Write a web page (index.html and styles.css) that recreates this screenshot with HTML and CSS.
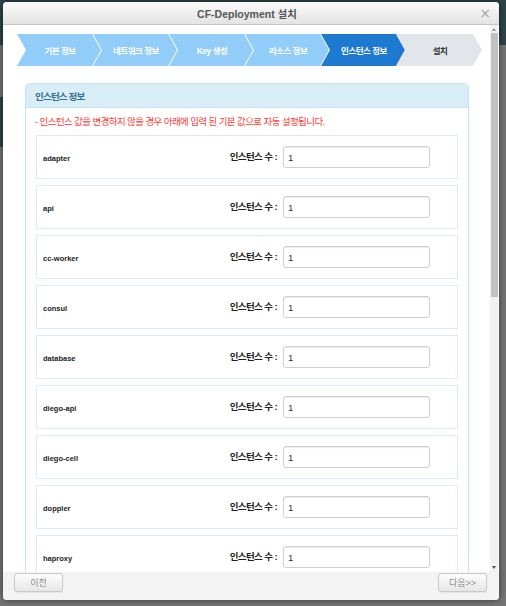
FILE: index.html
```html
<!DOCTYPE html>
<html lang="ko">
<head>
<meta charset="utf-8">
<title>CF-Deployment 설치</title>
<link rel="stylesheet" href="styles.css">
</head>
<body>
<div class="modal">
  <div class="modal-title">
    <span class="title-text">CF-Deployment 설치</span>
    <span class="close">×</span>
  </div>
  <div class="modal-body">
    <div class="scroll-content">
      <ol class="steps">
        <li class="step done">기본 정보</li>
        <li class="step done">네트워크 정보</li>
        <li class="step done">Key 생성</li>
        <li class="step done">리소스 정보</li>
        <li class="step active">인스턴스 정보</li>
        <li class="step todo">설치</li>
      </ol>
      <section class="panel">
        <div class="panel-head">인스턴스 정보</div>
        <div class="panel-body">
          <p class="notice">- 인스턴스 값을 변경하지 않을 경우 아래에 입력 된 기본 값으로 자동 설정됩니다.</p>
          <div class="row"><span class="name">adapter</span><label class="label">인스턴스 수 :</label><input class="field" type="text" value="1"></div>
          <div class="row"><span class="name">api</span><label class="label">인스턴스 수 :</label><input class="field" type="text" value="1"></div>
          <div class="row"><span class="name">cc-worker</span><label class="label">인스턴스 수 :</label><input class="field" type="text" value="1"></div>
          <div class="row"><span class="name">consul</span><label class="label">인스턴스 수 :</label><input class="field" type="text" value="1"></div>
          <div class="row"><span class="name">database</span><label class="label">인스턴스 수 :</label><input class="field" type="text" value="1"></div>
          <div class="row"><span class="name">diego-api</span><label class="label">인스턴스 수 :</label><input class="field" type="text" value="1"></div>
          <div class="row"><span class="name">diego-cell</span><label class="label">인스턴스 수 :</label><input class="field" type="text" value="1"></div>
          <div class="row"><span class="name">doppler</span><label class="label">인스턴스 수 :</label><input class="field" type="text" value="1"></div>
          <div class="row"><span class="name">haproxy</span><label class="label">인스턴스 수 :</label><input class="field" type="text" value="1"></div>
        </div>
      </section>
    </div>
    <div class="scrollbar" aria-hidden="true">
      <span class="sb-arrow up"></span>
      <span class="sb-thumb"></span>
      <span class="sb-space"></span>
      <span class="sb-arrow down"></span>
    </div>
  </div>
  <div class="modal-foot">
    <button class="btn" type="button">이전</button>
    <button class="btn" type="button">다음&gt;&gt;</button>
  </div>
</div>
</body>
</html>
```

FILE: styles.css
```css
html, body {
  margin: 0;
  padding: 0;
  height: 100%;
}

body {
  font-family: "Liberation Sans", "Noto Sans CJK KR", sans-serif;
  background:
    linear-gradient(#2c4449, #2c4449) 0 97px / 3px 50px no-repeat,
    linear-gradient(#2c4449 0 45px, #747474 45px);
  overflow: hidden;
}

.modal {
  margin: 2px 0 0 3px;
  width: 496px;
  height: 598px;
  background: #fff;
  border-radius: 4px;
  box-shadow: 0 0 6px rgba(0, 0, 0, 0.55);
  display: flex;
  flex-direction: column;
  overflow: hidden;
}

.modal-title {
  flex: 0 0 22px;
  border-bottom: 1px solid #c6c6c6;
  background: linear-gradient(#fbfbfb, #e3e3e3);
  display: flex;
  align-items: center;
  justify-content: center;
  position: relative;
}

.title-text {
  font-size: 10.5px;
  font-weight: bold;
  color: #555;
  margin-left: -8px;
}

.close {
  position: absolute;
  right: 8px;
  top: 3px;
  font-size: 14px;
  line-height: 16px;
  color: #a5a5a5;
  font-family: "DejaVu Sans", sans-serif;
}

.modal-body {
  flex: 1 1 auto;
  min-height: 0;
  display: flex;
}

.scroll-content {
  flex: 1 1 auto;
  min-width: 0;
  overflow: hidden;
  padding: 9px 0 0 14px;
}

/* drawn scrollbar */
.scrollbar {
  flex: 0 0 8px;
  background: #f1f1f1;
  display: flex;
  flex-direction: column;
  align-items: center;
  margin-right: 1px;
}

.sb-arrow {
  flex: 0 0 auto;
  width: 0;
  height: 0;
  border-left: 2.5px solid transparent;
  border-right: 2.5px solid transparent;
}

.sb-arrow.up {
  margin: 3px 0 2px;
  border-bottom: 3px solid #9a9a9a;
}

.sb-arrow.down {
  margin: 2px 0 3px;
  border-top: 3px solid #505050;
}

.sb-thumb {
  flex: 0 0 264px;
  width: 7px;
  background: #c1c1c1;
}

.sb-space {
  flex: 1 1 auto;
}

/* steps */
.steps {
  list-style: none;
  margin: 0 0 17px 0;
  padding: 0;
  display: flex;
}

.step {
  width: 84px;
  height: 32px;
  margin-left: -8px;
  display: flex;
  align-items: center;
  justify-content: center;
  font-size: 8.5px;
  font-weight: bold;
  letter-spacing: -0.5px;
  color: #fff;
  clip-path: polygon(0 0, calc(100% - 9px) 0, 100% 50%, calc(100% - 9px) 100%, 0 100%, 9px 50%);
  padding-left: 2px;
  box-sizing: border-box;
}

.step:first-child {
  margin-left: 0;
}

.step.done {
  background: #92ccf8;
}

.step.active {
  background: #1e79d1;
}

.step.todo {
  background: #e2e5e9;
  color: #333;
  width: 86px;
  margin-left: -9px;
}

/* panel */
.panel {
  margin-left: 8px;
  width: 444px;
  border: 1px solid #bce8f1;
  border-radius: 4px;
  box-sizing: border-box;
}

.panel-head {
  height: 23px;
  background: #d9edf7;
  border-bottom: 1px solid #bce8f1;
  border-radius: 3px 3px 0 0;
  display: flex;
  align-items: center;
  padding-left: 9px;
  font-size: 9.5px;
  font-weight: bold;
  letter-spacing: -0.8px;
  color: #31708f;
}

.panel-body {
  padding: 7px 10px 10px 10px;
}

.notice {
  margin: 0 0 6px -1px;
  line-height: 14px;
  font-size: 9.5px;
  letter-spacing: -0.6px;
  color: #ff3a33;
}

.row {
  height: 44px;
  margin-bottom: 6px;
  border: 1px solid #d8edf7;
  box-sizing: border-box;
  display: flex;
  align-items: center;
  padding: 0 27px 0 6px;
}

.name {
  flex: 1 1 auto;
  font-size: 7.5px;
  font-weight: bold;
  color: #222;
  padding-top: 2px;
}

.label {
  font-size: 9.5px;
  font-weight: bold;
  letter-spacing: -0.6px;
  color: #222;
  margin-right: 6px;
  padding-bottom: 2px;
}

.field {
  width: 147px;
  height: 22px;
  box-sizing: border-box;
  border: 1px solid #cfcfcf;
  border-radius: 3px;
  box-shadow: inset 0 1px 1px rgba(0, 0, 0, 0.08);
  padding: 0 4px;
  font-family: "Liberation Sans", sans-serif;
  font-size: 9.5px;
  color: #333;
  outline: none;
}

/* footer */
.modal-foot {
  flex: 0 0 28px;
  box-sizing: border-box;
  background: #f3f3f3;
  display: flex;
  justify-content: space-between;
  align-items: flex-start;
  padding: 1px 12px 0 11px;
}

.btn {
  width: 49px;
  height: 19px;
  padding: 0;
  border: 1px solid #c9c9c9;
  border-radius: 3px;
  background: linear-gradient(#fdfdfd, #e6e6e6);
  font-family: "Liberation Sans", "Noto Sans CJK KR", sans-serif;
  font-size: 9px;
  color: #8a8a8a;
  box-shadow: 0 1px 1px rgba(0, 0, 0, 0.06);
}
```
